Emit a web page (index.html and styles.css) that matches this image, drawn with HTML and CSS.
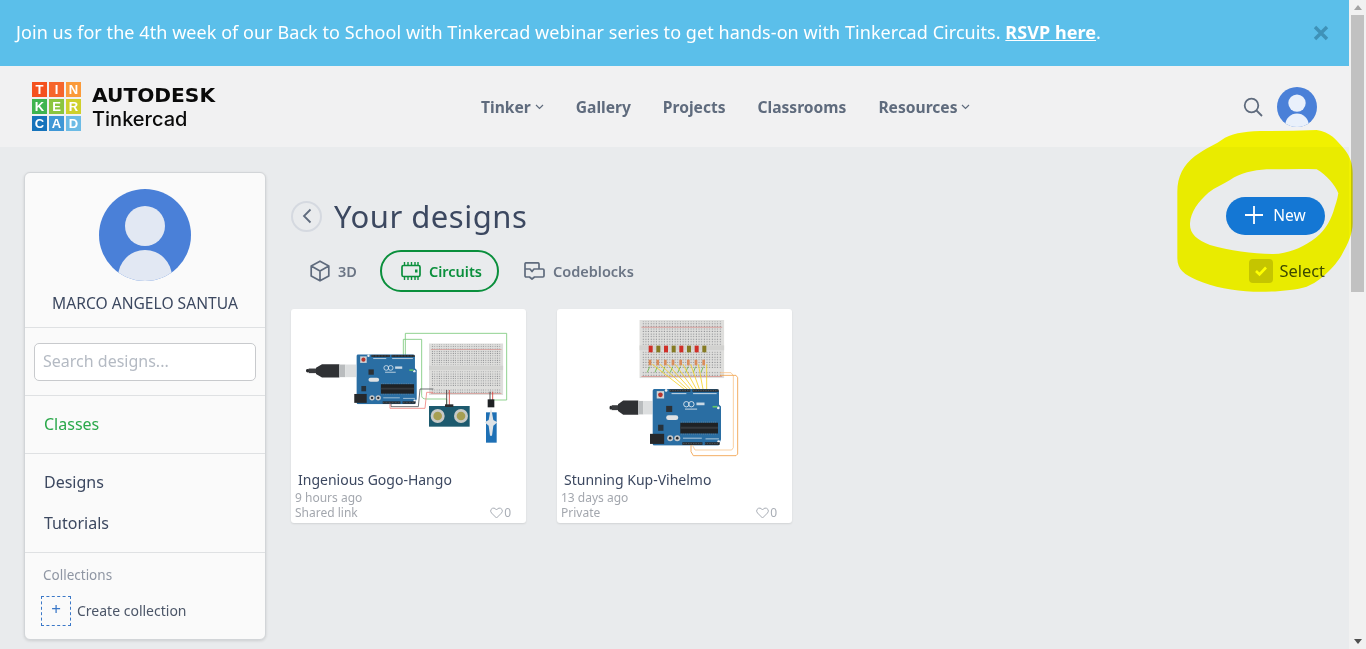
FILE: index.html
```html
<!DOCTYPE html>
<html lang="en">
<head>
<meta charset="utf-8">
<title>Tinkercad - Your designs</title>
<link rel="stylesheet" href="styles.css">
</head>
<body>
<svg class="defs" width="0" height="0" aria-hidden="true">
  <defs>
    <pattern id="holes" width="7.5" height="7.5" patternUnits="userSpaceOnUse"><rect x="2" y="2" width="3" height="3" fill="#85878a"/></pattern>
    <symbol id="board" viewBox="-10 0 215 170">
      <path d="M5 2H192L197 8V48L203 54V152L196 170H5Q0 170 0 165V7Q0 2 5 2Z" fill="#2a6ea3"/>
      <rect x="12" y="8" width="22" height="22" fill="#cfd3d6"/><circle cx="23" cy="19" r="7" fill="#b8342c"/>
      <circle cx="40" cy="6" r="4" fill="#eef1f3"/><circle cx="195" cy="58" r="4" fill="#eef1f3"/><circle cx="196" cy="158" r="4" fill="#eef1f3"/>
      <rect x="50" y="3" width="62" height="7" fill="#26292c"/><rect x="118" y="3" width="78" height="7" fill="#26292c"/>
      <path d="M52 6.500H110M120 6.500H194" stroke="#7d8286" stroke-width="2" stroke-dasharray="2 3"/>
      <rect x="88" y="160" width="60" height="8" fill="#26292c"/><rect x="155" y="160" width="44" height="8" fill="#26292c"/>
      <path d="M90 164H146M157 164H197" stroke="#7d8286" stroke-width="2" stroke-dasharray="2 3"/>
      <rect x="82" y="102" width="112" height="32" fill="#1f2225"/><rect x="82" y="114" width="112" height="6" fill="#35393d"/>
      <path d="M84 100H192M84 136H192" stroke="#8e9397" stroke-width="2" stroke-dasharray="2 4"/>
      <rect x="56" y="14" width="44" height="3" fill="#c5d7e4"/><rect x="120" y="14" width="70" height="3" fill="#c5d7e4"/>
      <circle cx="100" cy="47" r="8" fill="none" stroke="#e8eef3" stroke-width="2.5"/><circle cx="115" cy="47" r="8" fill="none" stroke="#e8eef3" stroke-width="2.5"/>
      <rect x="130" y="42" width="24" height="8" fill="#c8d8e4"/><rect x="96" y="60" width="36" height="3" fill="#c8d8e4"/>
      <rect x="178" y="52" width="14" height="5" fill="#63c76a"/>
      <rect x="40" y="52" width="18" height="18" fill="#2c3136"/><rect x="16" y="108" width="16" height="18" fill="#26323c"/>
      <rect x="40" y="80" width="36" height="14" rx="7" fill="#dfe2e4"/>
      <rect x="-8" y="135" width="42" height="30" fill="#26282b"/>
      <circle cx="52" cy="148" r="9" fill="#c5c8ca"/><circle cx="52" cy="148" r="4" fill="#2a2d30"/>
      <circle cx="73" cy="148" r="9" fill="#c5c8ca"/><circle cx="73" cy="148" r="4" fill="#2a2d30"/>
      <path d="M90 148H146M157 150H197" stroke="#c5d7e4" stroke-width="2.5"/>
    </symbol>
    <symbol id="usb" viewBox="0 0 150 50" preserveAspectRatio="none">
      <rect x="0" y="19" width="10" height="12" rx="5" fill="#26282b"/><rect x="8" y="17" width="26" height="16" fill="#3a3c3f"/>
      <path d="M30 14L48 2H100V48H48L30 36Z" fill="#2f3134"/>
      <rect x="100" y="3" width="18" height="44" fill="#b9bcbe"/><rect x="118" y="3" width="32" height="44" fill="#dcdedf"/>
    </symbol>
    <symbol id="bread" viewBox="0 0 240 170" preserveAspectRatio="none">
      <rect width="240" height="170" fill="#dededc"/>
      <rect x="8" y="4" width="224" height="16" fill="url(#holes)"/><rect x="8" y="24" width="224" height="48" fill="url(#holes)"/>
      <rect x="8" y="92" width="224" height="48" fill="url(#holes)"/><rect x="8" y="150" width="224" height="16" fill="url(#holes)"/>
      <rect x="6" y="20" width="228" height="1.5" fill="#d46a64"/><rect x="6" y="164" width="228" height="1.5" fill="#d46a64"/>
      <rect x="0" y="74" width="240" height="14" fill="#d2d2d0"/>
    </symbol>
  </defs>
</svg>
<div class="app">
  <div class="page">
    <div class="banner">
      <p class="banner-text">Join us for the 4th week of our Back to School with Tinkercad webinar series to get hands-on with Tinkercad Circuits. <a class="banner-link">RSVP here</a>.</p>
      <svg class="banner-close" width="16" height="16" viewBox="0 0 16 16"><path d="M2 2L14 14M14 2L2 14" stroke="#3f92b8" stroke-width="3.4" fill="none"/></svg>
    </div>
    <header class="topbar">
      <div class="logo">
        <div class="logo-grid">
          <span class="c1">T</span><span class="c2">I</span><span class="c3">N</span>
          <span class="c4">K</span><span class="c5">E</span><span class="c6">R</span>
          <span class="c7">C</span><span class="c8">A</span><span class="c9">D</span>
        </div>
        <div class="logo-text">
          <span class="logo-brand">AUTODESK</span>
          <span class="logo-product">Tinkercad</span>
        </div>
      </div>
      <nav class="nav">
        <a class="nav-item">Tinker<svg class="chev" width="9" height="6" viewBox="0 0 9 6"><path d="M1 1L4.5 4.5L8 1" fill="none" stroke="#5f6b7d" stroke-width="1.2"/></svg></a>
        <a class="nav-item">Gallery</a>
        <a class="nav-item">Projects</a>
        <a class="nav-item">Classrooms</a>
        <a class="nav-item">Resources<svg class="chev" width="9" height="6" viewBox="0 0 9 6"><path d="M1 1L4.5 4.5L8 1" fill="none" stroke="#5f6b7d" stroke-width="1.2"/></svg></a>
      </nav>
      <div class="top-actions">
        <svg width="20" height="20" viewBox="0 0 20 20"><circle cx="8.5" cy="8.5" r="6.8" fill="none" stroke="#5f6b7d" stroke-width="1.8"/><path d="M13.5 13.5L19 19" stroke="#5f6b7d" stroke-width="1.8"/></svg>
        <svg class="top-avatar" width="40" height="40" viewBox="0 0 92 92"><defs><clipPath id="ca"><circle cx="46" cy="46" r="46"/></clipPath></defs><circle cx="46" cy="46" r="46" fill="#4a80d8"/><g clip-path="url(#ca)"><circle cx="46" cy="37" r="20" fill="#e9f0fb"/><circle cx="46" cy="88" r="27" fill="#e9f0fb"/></g></svg>
      </div>
    </header>
    <div class="content">
      <aside class="sidebar">
        <section class="profile">
          <svg class="avatar" width="92" height="92" viewBox="0 0 92 92"><defs><clipPath id="cb"><circle cx="46" cy="46" r="46"/></clipPath></defs><circle cx="46" cy="46" r="46" fill="#4a80d8"/><g clip-path="url(#cb)"><circle cx="46" cy="37" r="20" fill="#e2e8f3"/><circle cx="46" cy="88" r="27" fill="#e2e8f3"/></g></svg>
          <div class="profile-name">MARCO ANGELO SANTUA</div>
        </section>
        <section class="search-section">
          <div class="search-box">Search designs...</div>
        </section>
        <section class="side-classes"><a class="side-link side-green">Classes</a></section>
        <section class="side-main">
          <a class="side-link">Designs</a>
          <a class="side-link">Tutorials</a>
        </section>
        <section class="side-coll">
          <div class="coll-title">Collections</div>
          <div class="coll-create">
            <span class="coll-plus">+</span>
            <span class="coll-label">Create collection</span>
          </div>
        </section>
      </aside>
      <main class="main">
        <div class="title-row">
          <div class="title-left">
            <span class="back"><svg width="10" height="16" viewBox="0 0 10 16"><path d="M8.5 1.5L2 8L8.5 14.5" fill="none" stroke="#5f6b7d" stroke-width="1.8"/></svg></span>
            <h1 class="title">Your designs</h1>
          </div>
          <button class="new-btn"><svg width="18" height="18" viewBox="0 0 18 18"><path d="M9 0V18M0 9H18" stroke="#fff" stroke-width="1.8"/></svg>New</button>
        </div>
        <div class="tabs-row">
          <div class="tabs">
            <a class="tab">
              <svg width="20" height="22" viewBox="0 0 20 22"><path d="M10 1.2L18.8 6V16L10 20.8L1.2 16V6ZM1.2 6L10 11L18.8 6M10 11V20.8" fill="none" stroke="#5f6b7d" stroke-width="1.7" stroke-linejoin="round"/></svg>3D</a>
            <a class="tab tab-active">
              <svg width="20" height="20" viewBox="0 0 20 20"><rect x="1" y="4.5" width="18" height="11" rx="1.5" fill="none" stroke="#0a8f3c" stroke-width="1.7"/><path d="M3.5 1V4M7 1V4M10.5 1V4M14 1V4M17 1V4M3.5 16V19M7 16V19M10.5 16V19M14 16V19M17 16V19" stroke="#0a8f3c" stroke-width="1.4"/><rect x="14" y="8.5" width="2.5" height="3" fill="#0a8f3c"/></svg>Circuits</a>
            <a class="tab">
              <svg width="21" height="18" viewBox="0 0 21 18"><path d="M1 7V2Q1 .8 2.2 .8H13.8Q15 .8 15 2V7M1 7H6L8 9.5L10 7H18.8Q20 7 20 8.2V13.8Q20 15 18.8 15H10.5L8 17L5.5 15H2.2Q1 15 1 13.8Z" fill="none" stroke="#5f6b7d" stroke-width="1.7" stroke-linejoin="round"/></svg>Codeblocks</a>
          </div>
          <label class="select"><span class="select-box"><svg width="14" height="12" viewBox="0 0 14 12"><path d="M2 6L5.5 9.5L12 2.5" fill="none" stroke="#fff" stroke-width="2.6"/></svg></span><span class="select-label">Select</span></label>
        </div>
        <div class="cards">
          <article class="card">
            <svg class="thumb" width="234" height="155" viewBox="3 12 702 465">
              <use href="#bread" x="417" y="115" width="223" height="155"/>
              <g fill="none" stroke-width="2.6">
                <path d="M346 150V85H650V285H612" stroke="#7fcb7f"/>
                <path d="M340 150V103H395V272Q395 282 410 282H470V300" stroke="#7fcb7f"/>
              </g>
              <use href="#usb" x="48" y="176" width="150" height="43"/>
              <use href="#board" x="188" y="147" width="197" height="151"/>
              <g fill="none" stroke-width="2.6">
                <path d="M303 296V305H385L390 252H430" stroke="#55585b"/>
                <path d="M300 296V310H405L410 262H430" stroke="#f08a86"/>
                <path d="M478 255V302" stroke="#d8433c"/><path d="M470 255V302" stroke="#3c3c3c"/>
                <path d="M600 260V285" stroke="#3c3c3c"/><path d="M608 260V285" stroke="#d8433c"/>
              </g>
              <rect x="417" y="303" width="122" height="62" fill="#1d5a6e"/>
              <circle cx="443" cy="333" r="21" fill="#c7cac7"/><circle cx="443" cy="333" r="13" fill="#a69f52"/>
              <circle cx="513" cy="333" r="21" fill="#c7cac7"/><circle cx="513" cy="333" r="13" fill="#a69f52"/>
              <rect x="465" y="298" width="25" height="8" fill="#2a2c2e"/>
              <rect x="588" y="322" width="32" height="91" fill="#1e70b5"/>
              <rect x="593" y="283" width="20" height="24" fill="#1f2124"/>
              <path d="M603 307L610 345L622 352L610 362L606 392H600L596 362L584 352L596 345Z" fill="#dfe3e6"/>
            </svg>
            <div class="card-name">Ingenious Gogo-Hango</div>
            <div class="card-foot">
              <div class="card-meta"><div>9 hours ago</div><div>Shared link</div></div>
              <div class="likes"><svg width="13" height="12" viewBox="0 0 13 12"><path d="M6.5 11L1.5 6Q0 4.2 1 2.5Q2.2 .8 4 1.1Q5.6 1.4 6.5 3Q7.4 1.4 9 1.1Q10.8 .8 12 2.5Q13 4.2 11.5 6Z" fill="none" stroke="#a8adb5" stroke-width="1"/></svg>0</div>
            </div>
          </article>
          <article class="card">
            <svg class="thumb" width="235" height="155" viewBox="6 12 705 465">
              <use href="#bread" x="253" y="45" width="255" height="175"/>
              <g fill="#d02f28"><rect x="281" y="122" width="12" height="20"/><rect x="327" y="122" width="12" height="20"/><rect x="373" y="122" width="12" height="20"/><rect x="419" y="122" width="12" height="20"/></g>
              <g fill="#857a22"><rect x="304" y="122" width="12" height="20"/><rect x="350" y="122" width="12" height="20"/><rect x="396" y="122" width="12" height="20"/><rect x="442" y="122" width="12" height="20"/></g>
              <g fill="#d98c5a"><rect x="281" y="164" width="8" height="17"/><rect x="304" y="164" width="8" height="17"/><rect x="327" y="164" width="8" height="17"/><rect x="350" y="164" width="8" height="17"/><rect x="373" y="164" width="8" height="17"/><rect x="396" y="164" width="8" height="17"/><rect x="419" y="164" width="8" height="17"/><rect x="442" y="164" width="8" height="17"/></g>
              <path d="M284 185L277 202M307 185L300 202M330 185L323 202M353 185L346 202M376 185L369 202M399 185L392 202M422 185L415 202M445 185L438 202" stroke="#5fb43c" stroke-width="2.4"/>
              <g fill="none">
                <path d="M292 178L395 258M315 178L403 258M338 178L411 258M361 178L419 258M384 178L427 258M407 178L435 258M430 178L445 258M455 178V258" stroke="#f5d020" stroke-width="2.4"/>
              </g>
              <use href="#usb" x="163" y="285" width="130" height="46"/>
              <use href="#board" x="283" y="250" width="217" height="172"/>
              <g fill="none" stroke-width="2.4">
                <path d="M495 203H528L535 212V428L530 435H420L412 420" stroke="#f8c48a"/>
                <path d="M495 211H543L548 218V447L543 452H415L408 440V420" stroke="#f09a3e"/>
              </g>
            </svg>
            <div class="card-name">Stunning Kup-Vihelmo</div>
            <div class="card-foot">
              <div class="card-meta"><div>13 days ago</div><div>Private</div></div>
              <div class="likes"><svg width="13" height="12" viewBox="0 0 13 12"><path d="M6.5 11L1.5 6Q0 4.2 1 2.5Q2.2 .8 4 1.1Q5.6 1.4 6.5 3Q7.4 1.4 9 1.1Q10.8 .8 12 2.5Q13 4.2 11.5 6Z" fill="none" stroke="#a8adb5" stroke-width="1"/></svg>0</div>
            </div>
          </article>
        </div>
      </main>
    </div>
  </div>
  <div class="scrollbar">
    <span class="sb-up"></span>
    <span class="sb-thumb"></span>
    <span class="sb-space"></span>
    <span class="sb-down"></span>
  </div>
</div>
<svg class="marker" width="206" height="300" viewBox="0 0 618 900"><path fill-rule="evenodd" fill="#ffff00" d="M52 575C52 530 70 495 105 468C135 445 165 435 195 413C225 398 265 393 320 393C370 393 420 392 470 390C510 395 530 420 555 450C570 470 578 490 578 520V670C578 700 565 730 545 765C525 800 480 845 440 860C400 872 340 876 280 875C220 872 160 862 110 840C75 825 52 810 52 775ZM90 670C88 700 110 720 150 735C210 752 280 762 340 762C385 760 420 745 455 722C490 700 510 665 520 635C526 615 532 600 535 580C525 555 500 525 470 508C420 506 370 508 320 508C280 510 240 520 210 540C190 553 165 562 145 578C115 605 92 635 90 670Z"/></svg>
</body>
</html>
```
FILE: styles.css
```css
* { box-sizing: border-box; }
html, body { margin: 0; height: 649px; overflow: hidden; }
body { font-family: "Noto Sans", "Open Sans", sans-serif; color: #3c4860; background: #e9ebed; position: relative; }
a { color: inherit; text-decoration: none; }
.defs { position: absolute; }
.app { display: flex; height: 649px; }
.page { flex: 1; min-width: 0; display: flex; flex-direction: column; }

.banner { height: 66px; flex: none; background: #5bbfea; color: #fff; display: flex; align-items: center; justify-content: space-between; padding: 0 20px 2px 16px; }
.banner-text { margin: 0; font-size: 18px; letter-spacing: 0.06px; white-space: nowrap; }
.banner-link { font-weight: 700; text-decoration: underline; }
.banner-close { margin-top: 2px; }

.topbar { height: 81px; flex: none; background: #f1f1f2; display: flex; align-items: center; padding: 0 32px; position: relative; }
.logo { display: flex; align-items: center; gap: 11px; width: 449px; }
.logo-grid { display: grid; grid-template-columns: repeat(3, 15px); grid-auto-rows: 15px; gap: 2px; }
.logo-grid span { color: #fff; font: 700 13px/15px "Liberation Sans", sans-serif; text-align: center; }
.c1 { background: #f4511e; } .c2 { background: #f6652c; } .c3 { background: #fb9a3a; }
.c4 { background: #3fb44f; } .c5 { background: #8bc53f; } .c6 { background: #cfd02c; }
.c7 { background: #1673bb; } .c8 { background: #3f97d6; } .c9 { background: #6cbbe5; }
.logo-text { display: flex; flex-direction: column; gap: 2px; color: #0a0a0a; }
.logo-brand { font: 700 20.2px/22px "DejaVu Sans", sans-serif; }
.logo-product { font: 500 20px/22px Inter, sans-serif; }
.nav { display: flex; gap: 32px; color: #5f6b7d; font-size: 15.6px; font-weight: 700; }
.nav-item { display: flex; align-items: center; gap: 4px; }
.top-actions { margin-left: auto; display: flex; align-items: center; gap: 14px; }

.content { flex: 1; min-height: 0; display: flex; padding: 25px 0 0 24px; gap: 24px; }
.sidebar { width: 242px; height: 468px; flex: none; background: #fafafa; border: 1px solid #d2d5d8; border-radius: 6px; box-shadow: 0 1px 3px rgba(0,0,0,.12); }
.profile { height: 155px; display: flex; flex-direction: column; align-items: center; padding-top: 16px; border-bottom: 1px solid #dfe1e3; }
.avatar { display: block; }
.profile-name { margin-top: 11px; font-size: 15.6px; line-height: 22px; white-space: nowrap; }
.search-section { height: 68px; padding: 15px 9px 0 9px; border-bottom: 1px solid #dfe1e3; }
.search-box { height: 38px; background: #fff; border: 1px solid #c8cacd; border-radius: 5px; color: #b4bac3; font-size: 16px; line-height: 35px; padding-left: 8px; }
.side-classes { height: 58px; display: flex; align-items: center; padding: 0 0 2px 19px; border-bottom: 1px solid #dfe1e3; }
.side-link { font-size: 16px; line-height: 22px; display: block; }
.side-green { color: #2aa84a; }
.side-main { height: 99px; display: flex; flex-direction: column; gap: 19px; padding: 17px 0 0 19px; border-bottom: 1px solid #dfe1e3; }
.side-coll { padding: 13px 0 0 16px; }
.coll-title { font-size: 13.5px; line-height: 18px; color: #8f96a3; margin-left: 2px; }
.coll-create { display: flex; align-items: center; gap: 6px; margin-top: 12px; }
.coll-plus { width: 30px; height: 30px; border: 1px dashed #3b78c8; color: #3b78c8; font-size: 17px; line-height: 24px; text-align: center; }
.coll-label { font-size: 14px; color: #4c5668; padding-bottom: 2px; }

.main { flex: 1; min-width: 0; padding: 0 24px 0 0; }
.title-row { display: flex; justify-content: space-between; align-items: center; height: 66px; margin-top: 7px; padding-top: 8px; }
.title-left { display: flex; align-items: center; gap: 12px; padding-left: 1px; }
.back { width: 31px; height: 31px; border: 2px solid #d5d9e0; border-radius: 50%; display: flex; align-items: center; justify-content: center; }
.title { margin: 0; font-size: 31px; font-weight: 400; line-height: 42px; letter-spacing: 0.5px; color: #3c4860; }
.new-btn { width: 99px; height: 38px; border: 0; border-radius: 19px; background: #1477d4; color: #fff; font: 400 15.5px/18px "Noto Sans", sans-serif; display: flex; align-items: center; justify-content: center; gap: 10px; padding: 0 0 2px; }
.tabs-row { display: flex; justify-content: space-between; align-items: center; height: 42px; margin-top: 5px; }
.tabs { display: flex; align-items: center; padding-left: 20px; }
.tab { display: flex; align-items: center; gap: 8px; font-size: 14.5px; font-weight: 600; color: #6b7585; }
.tab-active { height: 42px; margin: 0 25px 0 23px; padding: 0 15px 0 19px; border: 2px solid #0a8f3c; border-radius: 21px; color: #0a8f3c; }
.select { display: flex; align-items: center; gap: 6px; font-size: 16.4px; color: #3c4860; }
.select-label { padding-bottom: 2px; }
.select-box { width: 24px; height: 24px; border-radius: 4px; background: #c5c5c5; display: flex; align-items: center; justify-content: center; }
.cards { display: flex; gap: 31px; margin-top: 17px; padding-left: 1px; }
.card { width: 235px; height: 214px; background: #fff; border-radius: 3px; box-shadow: 0 1px 2px rgba(0,0,0,.1); }
.thumb { display: block; }
.card-name { font-size: 14px; line-height: 20px; padding-left: 7px; margin-top: 6px; color: #3c4860; }
.card-foot { display: flex; justify-content: space-between; align-items: flex-end; padding: 0 15px 0 4px; }
.card-meta { font-size: 12px; line-height: 15px; color: #a3a7ae; }
.likes { display: flex; align-items: center; gap: 1px; font-size: 12px; line-height: 15px; color: #a8adb5; }

.scrollbar { width: 17px; flex: none; background: #f1f1f1; display: flex; flex-direction: column; align-items: center; }
.sb-up { width: 0; height: 0; margin: 5px 0 5px; border: 4px solid transparent; border-top: 0; border-bottom: 5px solid #a3a3a3; }
.sb-thumb { width: 13px; height: 277px; background: #c1c1c1; }
.sb-space { flex: 1; }
.sb-down { width: 0; height: 0; margin: 5px 0 5px; border: 4px solid transparent; border-bottom: 0; border-top: 5px solid #505050; }

.marker { position: absolute; left: 1160px; top: 0; mix-blend-mode: multiply; }
```
